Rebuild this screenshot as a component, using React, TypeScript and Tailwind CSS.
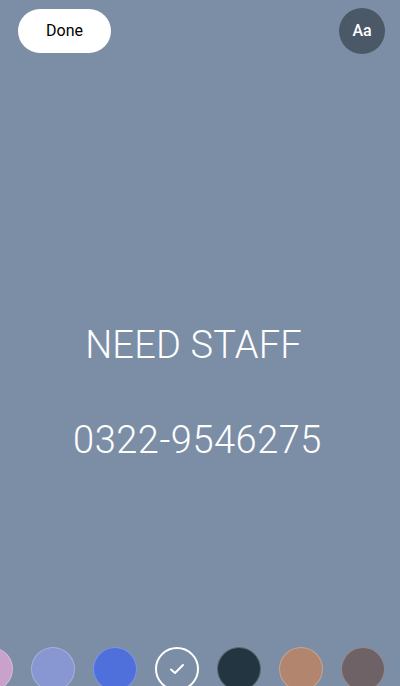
import React from "react";

const colors = ["#c8a2cb", "#8896d2", "#4f70db", "sel", "#233540", "#b2866e", "#6f6267"];

export default function App() {
  return (
    <div
      className="relative w-[400px] h-[686px] overflow-hidden bg-[#7c8ea5] flex flex-col"
      style={{ fontFamily: "Roboto, 'Liberation Sans', sans-serif" }}
    >
      <div className="flex items-center justify-between pt-2 pl-[18px] pr-[15px]">
        <button className="w-[93px] h-[44px] rounded-full bg-white text-black text-[16px] flex items-center justify-center">
          Done
        </button>
        <div className="w-[46px] h-[46px] rounded-full bg-[#4a5868] text-white text-[16px] font-medium flex items-center justify-center">
          Aa
        </div>
      </div>
      <div className="flex flex-col items-center text-white mt-[272px] font-light">
        <div className="text-[38px] leading-none tracking-[0.2px] pr-[13px]">NEED STAFF</div>
        <div className="text-[38px] leading-none mt-[57px] tracking-[0.5px] pr-[5px]">0322-9546275</div>
      </div>
      <div className="mt-auto mb-[-5px] flex gap-[18px] ml-[-31px]">
        {colors.map((c, i) =>
          c === "sel" ? (
            <div
              key={i}
              className="w-[44px] h-[44px] shrink-0 rounded-full border-2 border-white flex items-center justify-center"
            >
              <svg width="16" height="12" viewBox="0 0 16 12" fill="none">
                <path d="M2 6.5 L6 10 L14 2" stroke="white" strokeWidth="2" strokeLinecap="round" strokeLinejoin="round" />
              </svg>
            </div>
          ) : (
            <div
              key={i}
              className="w-[44px] h-[44px] shrink-0 rounded-full border border-white/25"
              style={{ backgroundColor: c }}
            />
          )
        )}
      </div>
    </div>
  );
}
